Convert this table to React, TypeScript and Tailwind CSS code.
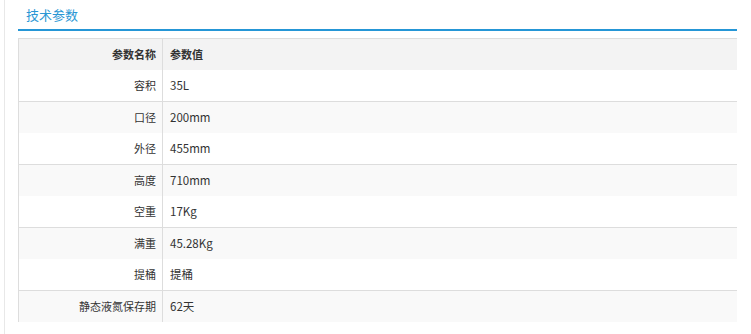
const rows: [string, string][] = [
  ["容积", "35L"],
  ["口径", "200mm"],
  ["外径", "455mm"],
  ["高度", "710mm"],
  ["空重", "17Kg"],
  ["满重", "45.28Kg"],
  ["提桶", "提桶"],
  ["静态液氮保存期", "62天"],
];

export default function App() {
  return (
    <div
      className="h-[334px] w-[751px] overflow-hidden bg-white pl-[4px]"
      style={{ fontFamily: '"Noto Sans CJK SC", "Noto Sans", sans-serif' }}
    >
      <div className="h-full border-l border-[#e8e8e8] pl-[13px] pr-[14px]">
        <div className="flex h-[29px] items-end pb-[5px] pl-[8px]">
          <span className="text-[13px] leading-[18px] text-[#2b97d4]">技术参数</span>
        </div>
        <div className="h-[1.5px] bg-[#2596d6]" />
        <div className="mt-[7.5px] border-l border-[#dddddd] text-[11px] text-[#333]">
          <div className="flex h-[32px] items-center border-t border-[#dddddd] bg-[#f3f3f3] font-bold">
            <div className="w-[143px] pr-[6px] text-right">参数名称</div>
            <div className="h-full w-px bg-[#dddddd]" />
            <div className="pl-[7px]">参数值</div>
          </div>
          {rows.map(([k, v], i) => (
            <div
              key={k}
              className={
                i % 2 === 1
                  ? "flex h-[32px] items-center border-t border-[#dddddd] bg-[#f9f9f9]"
                  : "flex h-[31px] items-center bg-white"
              }
            >
              <div className="w-[143px] pr-[6px] text-right">{k}</div>
              <div className="h-full w-px bg-[#dddddd]" />
              <div className="pl-[7px] text-[11.5px]">{v}</div>
            </div>
          ))}
        </div>
      </div>
    </div>
  );
}
